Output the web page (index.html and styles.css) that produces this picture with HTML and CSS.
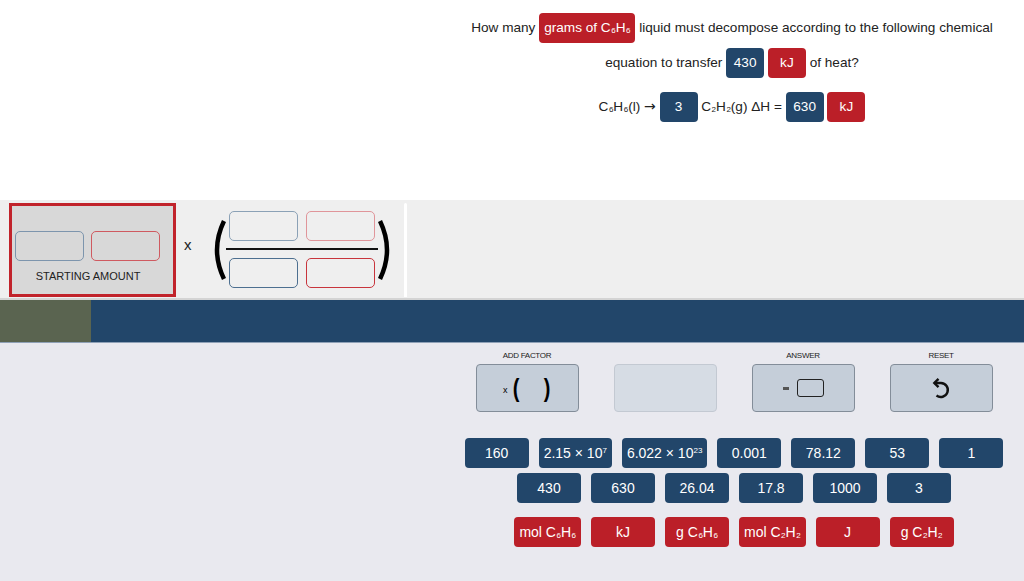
FILE: index.html
```html
<!DOCTYPE html>
<html lang="en">
<head>
    <meta charset="UTF-8">
    <meta name="viewport" content="width=device-width, initial-scale=1.0">
    <title>Dimensional Analysis</title>
    <link rel="stylesheet" href="styles.css">
</head>
<body>
    <header class="prompt">
        <div class="question">
            <p>How many <span class="chip red">grams of C<sub>6</sub>H<sub>6</sub></span> liquid must decompose according to the following chemical equation to transfer <span class="chip blue">430</span> <span class="chip red">kJ</span> of heat?</p>
            <p class="equation">C<sub>6</sub>H<sub>6</sub>(l) <span class="arrow">&rarr;</span> <span class="chip blue">3</span> C<sub>2</sub>H<sub>2</sub>(g) &Delta;H = <span class="chip blue">630</span> <span class="chip red">kJ</span></p>
        </div>
    </header>

    <section class="workspace">
        <div class="starting">
            <div class="slot-row">
                <div class="slot slot-num"></div>
                <div class="slot slot-unit"></div>
            </div>
            <div class="starting-label">STARTING AMOUNT</div>
        </div>
        <span class="times">x</span>
        <svg class="paren paren-open" width="16" height="62" viewBox="0 0 16 62">
            <path d="M14 2 Q0 31 14 60" fill="none" stroke="#000" stroke-width="4.5"/>
        </svg>
        <div class="fraction">
            <div class="slot-row">
                <div class="slot slot-num faint"></div>
                <div class="slot slot-unit faint"></div>
            </div>
            <div class="fraction-bar"></div>
            <div class="slot-row">
                <div class="slot slot-num"></div>
                <div class="slot slot-unit"></div>
            </div>
        </div>
        <svg class="paren" width="16" height="62" viewBox="0 0 16 62">
            <path d="M2 2 Q16 31 2 60" fill="none" stroke="#000" stroke-width="4.5"/>
        </svg>
        <div class="divider"></div>
    </section>

    <div class="progress">
        <div class="progress-done"></div>
    </div>

    <section class="tray">
        <div class="tray-inner">
            <div class="controls">
                <div class="control">
                    <span class="control-label">ADD FACTOR</span>
                    <button class="control-btn">
                        <span class="ico-x">x</span><span class="ico-paren">(</span><span class="ico-space"></span><span class="ico-paren">)</span>
                    </button>
                </div>
                <div class="control">
                    <span class="control-label">&nbsp;</span>
                    <button class="control-btn disabled"></button>
                </div>
                <div class="control">
                    <span class="control-label">ANSWER</span>
                    <button class="control-btn">
                        <span class="ico-dash"></span><span class="ico-box"></span>
                    </button>
                </div>
                <div class="control">
                    <span class="control-label">RESET</span>
                    <button class="control-btn">
                        <svg width="24" height="24" viewBox="0 0 24 24">
                            <path d="M5.5 7 H12 A7 7 0 1 1 7.5 19.5" fill="none" stroke="#111" stroke-width="2.4"/>
                            <path d="M9.5 2.8 L5.3 7 L9.5 11.2" fill="none" stroke="#111" stroke-width="2.4"/>
                        </svg>
                    </button>
                </div>
            </div>

            <div class="tile-row">
                <span class="tile blue">160</span>
                <span class="tile blue">2.15 &times; 10<sup>7</sup></span>
                <span class="tile blue">6.022 &times; 10<sup>23</sup></span>
                <span class="tile blue">0.001</span>
                <span class="tile blue">78.12</span>
                <span class="tile blue">53</span>
                <span class="tile blue">1</span>
            </div>
            <div class="tile-row">
                <span class="tile blue">430</span>
                <span class="tile blue">630</span>
                <span class="tile blue">26.04</span>
                <span class="tile blue">17.8</span>
                <span class="tile blue">1000</span>
                <span class="tile blue">3</span>
            </div>
            <div class="tile-row units">
                <span class="tile red">mol C<sub>6</sub>H<sub>6</sub></span>
                <span class="tile red">kJ</span>
                <span class="tile red">g C<sub>6</sub>H<sub>6</sub></span>
                <span class="tile red">mol C<sub>2</sub>H<sub>2</sub></span>
                <span class="tile red">J</span>
                <span class="tile red">g C<sub>2</sub>H<sub>2</sub></span>
            </div>
        </div>
    </section>
</body>
</html>
```

FILE: styles.css
```css
body {
    font-family: "Liberation Sans", Arial, sans-serif;
    margin: 0;
    padding: 0;
    background-color: #e9e9ef;
    color: #222;
    font-size: 13px;
}

/* question */
.prompt {
    height: 200px;
    background: #fff;
}

.question {
    margin-left: 440px;
    padding: 10px 16px 0;
    text-align: center;
    font-size: 13.6px;
}

.question p {
    margin: 0;
    line-height: 35px;
}

.question .equation {
    margin-top: 9px;
}

.arrow {
    font-family: "DejaVu Sans", sans-serif;
    font-size: 14px;
}

sub, sup {
    font-size: 8px;
    line-height: 0;
}

sub {
    vertical-align: -1px;
    margin-left: 0.5px;
}

sup {
    vertical-align: 5px;
}

.chip {
    display: inline-block;
    box-sizing: border-box;
    min-width: 38px;
    height: 30px;
    line-height: 30px;
    padding: 0 5px;
    border-radius: 4px;
    color: #fff;
    font-size: 13.6px;
    vertical-align: middle;
    text-align: center;
}

.blue {
    background-color: #22466a;
}

.red {
    background-color: #bb1f28;
}

/* workspace */
.workspace {
    display: flex;
    align-items: flex-start;
    height: 98px;
    padding: 0 9px;
    background: #efefef;
    border-bottom: 2px solid #d4d4d4;
}

.starting {
    box-sizing: border-box;
    width: 167px;
    height: 94px;
    margin-top: 3px;
    padding: 25px 0 0 3px;
    border: 3px solid #c1232b;
    background: #d8d8d8;
}

.slot-row {
    display: flex;
    gap: 8px;
}

.slot {
    box-sizing: border-box;
    width: 69px;
    height: 30px;
    border-radius: 5px;
    border: 1px solid;
}

.slot-num {
    border-color: #4d6f90;
}

.slot-unit {
    border-color: #c8343c;
}

.slot-num.faint {
    border-color: #8ba1b6;
}

.slot-unit.faint {
    border-color: #e0959a;
}

.starting .slot-row {
    gap: 7px;
}

.starting .slot-num {
    border-color: #7d95ad;
}

.starting .slot-unit {
    border-color: #cf5a60;
}

.starting-label {
    margin-top: 9px;
    width: 146px;
    text-align: center;
    font-size: 11px;
    color: #222;
}

.times {
    margin: 36px 0 0 8px;
    font-size: 15px;
}

.paren {
    margin-top: 19px;
}

.paren-open {
    margin-left: 18px;
}

.fraction {
    margin-top: 11px;
    padding: 0 3px;
}

.fraction-bar {
    height: 2px;
    margin: 7px -3px 8px;
    background: #111;
}

.divider {
    width: 3px;
    height: 94px;
    margin: 3px 0 0 10px;
    border-radius: 2px 2px 0 0;
    background: #fff;
}

/* progress */
.progress {
    height: 42px;
    background: #22466a;
    border-bottom: 1px solid #8fa1b7;
}

.progress-done {
    width: 91px;
    height: 100%;
    background: #5a6450;
}

/* tray */
.tray {
    padding-top: 8px;
}

.tray-inner {
    margin-left: 444px;
    display: flex;
    flex-direction: column;
    align-items: center;
}

.controls {
    display: flex;
    gap: 35px;
    margin-bottom: 26px;
}

.control {
    display: flex;
    flex-direction: column;
    align-items: center;
}

.control-label {
    font-size: 8px;
    line-height: 10px;
    margin-bottom: 3px;
    letter-spacing: -0.3px;
    color: #222;
}

.control-btn {
    display: flex;
    align-items: center;
    justify-content: center;
    width: 103px;
    height: 48px;
    padding: 0;
    border: 1px solid #838d99;
    border-radius: 4px;
    background: #c5ced9;
    font-family: inherit;
    cursor: pointer;
}

.control-btn.disabled {
    background: #d6dce4;
    border-color: #c3c9d2;
    cursor: default;
}

.ico-x {
    font-size: 9px;
    margin: 4px 5px 0 0;
}

.ico-paren {
    font-size: 25px;
    font-weight: bold;
    line-height: 1;
    transform: scaleX(0.8);
}

.ico-space {
    width: 22px;
}

.ico-dash {
    width: 6px;
    height: 3px;
    margin-right: 8px;
    background: #555;
}

.ico-box {
    box-sizing: border-box;
    width: 27px;
    height: 18px;
    border: 1.5px solid #222;
    border-radius: 3px;
}

.tile-row {
    display: flex;
    gap: 10px;
    margin-bottom: 5px;
}

.tile-row.units {
    margin-top: 9px;
}

.tile {
    box-sizing: border-box;
    min-width: 64px;
    height: 30px;
    line-height: 30px;
    padding: 0 5px;
    border-radius: 4px;
    color: #fff;
    font-size: 14px;
    text-align: center;
    white-space: nowrap;
}
```
